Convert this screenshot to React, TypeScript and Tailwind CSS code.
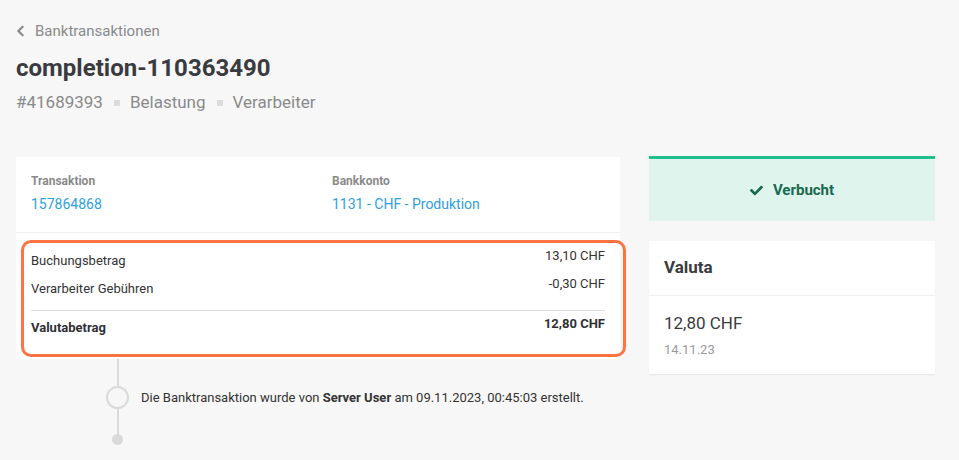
import React from "react";

const Check = () => (
  <svg viewBox="0 0 512 512" className="w-[13px] h-[13px]" fill="#17694f">
    <path d="M173.898 439.404l-166.4-166.4c-9.997-9.997-9.997-26.206 0-36.204l36.203-36.204c9.997-9.998 26.207-9.998 36.204 0L192 312.69 432.095 72.596c9.997-9.997 26.207-9.997 36.204 0l36.203 36.204c9.997 9.997 9.997 26.206 0 36.204l-294.4 294.401c-9.998 9.997-26.207 9.997-36.204-.001z" />
  </svg>
);

const Chevron = () => (
  <svg viewBox="0 0 10 14" className="w-[9px] h-[12px]" fill="none" stroke="#8a8a8a" strokeWidth="2.6" strokeLinecap="round" strokeLinejoin="round">
    <polyline points="7.5,2 2.5,7 7.5,12" />
  </svg>
);

export default function App() {
  return (
    <div className="min-h-[460px] bg-[#f7f7f7] pl-[16px] pr-[24px] pt-[21px] text-[#333] [font-family:Roboto,'Liberation_Sans',sans-serif]">
      {/* header */}
      <div className="flex items-center gap-[10px] h-[20px] text-[15px] text-[#8a8a8a]">
        <Chevron />
        <span>Banktransaktionen</span>
      </div>
      <h1 className="mt-[11px] h-[32px] leading-[32px] text-[24px] font-bold text-[#3a3b40]">completion-110363490</h1>
      <div className="mt-[7px] flex items-center h-[24px] text-[17px] text-[#8a8a8a]">
        <span>#41689393</span>
        <span className="ml-[11px] mr-[10px] w-[6px] h-[6px] bg-[#dcdcdc]" />
        <span>Belastung</span>
        <span className="ml-[11px] mr-[10px] w-[6px] h-[6px] bg-[#dcdcdc]" />
        <span>Verarbeiter</span>
      </div>

      <div className="mt-[41px] flex gap-[29px]">
        {/* left column */}
        <div className="w-[604px]">
          <div className="bg-white mt-[1px]">
            <div className="grid grid-cols-2 gap-x-[28px] px-[15px] pt-[17px] pb-[18px] border-b border-[#efefef]">
              <div>
                <div className="text-[12px] leading-[14px] font-bold text-[#8a8a8a]">Transaktion</div>
                <div className="mt-[6px] text-[14px] leading-[20px] text-[#2fa0e0]">157864868</div>
              </div>
              <div>
                <div className="text-[12px] leading-[14px] font-bold text-[#8a8a8a]">Bankkonto</div>
                <div className="mt-[6px] text-[14px] leading-[20px] text-[#2fa0e0]">1131 - CHF - Produktion</div>
              </div>
            </div>
            <div className="relative px-[15px] pt-[13px] pb-[21px]">
              <div className="flex justify-between items-start">
                <span className="mt-[5px] text-[13px] leading-[20px]">Buchungsbetrag</span>
                <span className="text-[13px] leading-[20px]">13,10 CHF</span>
              </div>
              <div className="mt-[3px] flex justify-between items-start">
                <span className="mt-[5px] text-[13px] leading-[20px]">Verarbeiter Gebühren</span>
                <span className="text-[13px] leading-[20px]">-0,30 CHF</span>
              </div>
              <div className="mt-[11px] h-px bg-[#dddddd]" />
              <div className="mt-[3px] flex justify-between items-start">
                <span className="mt-[4px] text-[13px] leading-[20px] font-bold text-[#2f3035]">Valutabetrag</span>
                <span className="text-[13px] leading-[20px] font-bold text-[#2f3035]">12,80 CHF</span>
              </div>
              <div className="pointer-events-none absolute top-[7px] bottom-[2px] left-[5px] right-[-6px] border-[3px] border-[#ff7342] rounded-[10px]" />
            </div>
          </div>

          {/* timeline */}
          <div className="ml-[90px]">
            <div className="w-[23px] flex justify-center">
              <div className="w-[2px] h-[27px] bg-[#dadada]" />
            </div>
            <div className="flex items-center gap-[12px]">
              <div className="w-[23px] h-[23px] rounded-full border-2 border-[#dadada]" />
              <span className="text-[13px] leading-[16px]">
                Die Banktransaktion wurde von <b className="font-bold">Server User</b> am 09.11.2023, 00:45:03 erstellt.
              </span>
            </div>
            <div className="w-[23px] flex flex-col items-center">
              <div className="w-[2px] h-[26px] bg-[#dadada]" />
              <div className="w-[11px] h-[11px] -mt-[1px] rounded-full bg-[#dadada]" />
            </div>
          </div>
        </div>

        {/* right column */}
        <div className="w-[286px]">
          <div className="h-[65px] border-t-[3px] border-[#22bf8e] bg-[#e0f4ee] flex items-center justify-center gap-[10px]">
            <Check />
            <span className="text-[15px] font-bold text-[#17694f]">Verbucht</span>
          </div>
          <div className="mt-[20px] bg-white shadow-[0_1px_1px_rgba(0,0,0,0.06)]">
            <div className="h-[55px] flex items-center px-[15px] border-b border-[#efefef] text-[17px] font-bold text-[#3a3b40]">Valuta</div>
            <div className="px-[15px] pt-[15px] pb-[16px]">
              <div className="text-[17px] leading-[24px] text-[#3a3b40]">12,80 CHF</div>
              <div className="mt-[7px] text-[13px] leading-[16px] text-[#9a9a9a]">14.11.23</div>
            </div>
          </div>
        </div>
      </div>
    </div>
  );
}
